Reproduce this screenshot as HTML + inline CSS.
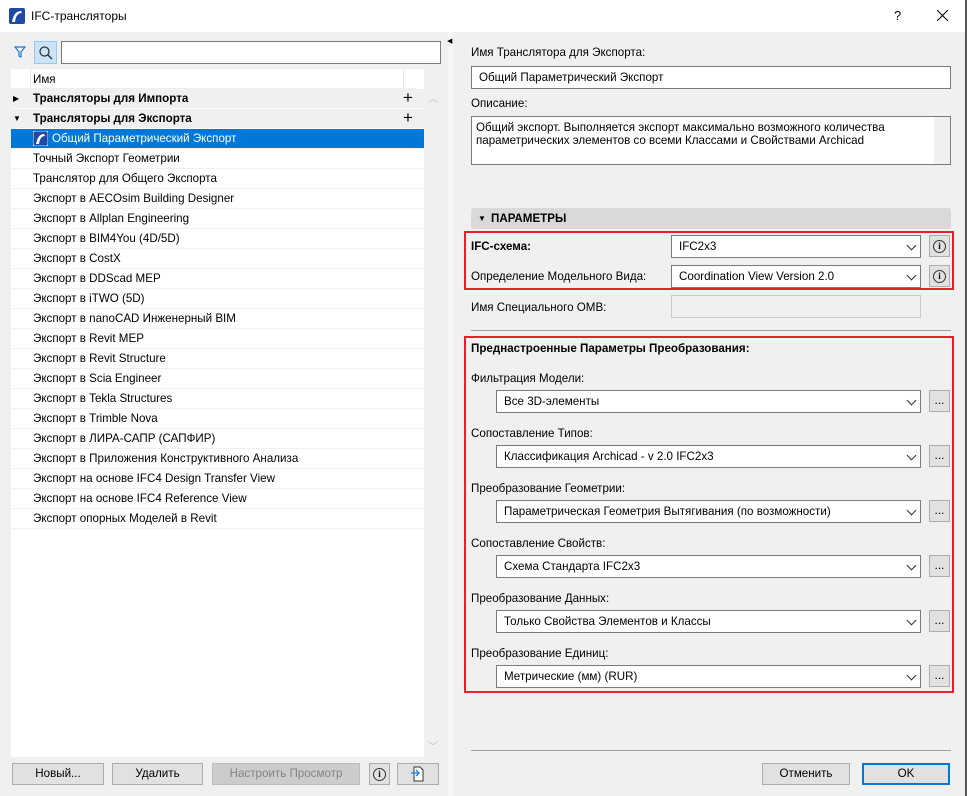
<!DOCTYPE html>
<html><head><meta charset="utf-8"><style>
*{box-sizing:border-box;margin:0;padding:0}
body{width:967px;height:796px;overflow:hidden;background:#f0f0f0;font-family:"Liberation Sans","DejaVu Sans",sans-serif;font-size:11.6px;color:#000;position:relative}
.a{position:absolute}
.inp{position:absolute;background:#fff;border:1px solid #7a7a7a;height:23px;padding:4px 7px;white-space:nowrap}
.sel{position:absolute;background:#fff;border:1px solid #7a7a7a;height:23px;padding:4px 7px;white-space:nowrap}
.sel:after{content:"";position:absolute;right:5px;top:6px;width:6px;height:6px;border-right:1px solid #333;border-bottom:1px solid #333;transform:rotate(45deg)}
.btn{position:absolute;background:#e1e1e1;border:1px solid #adadad;height:22px;text-align:center;line-height:20px}
.sq{position:absolute;background:#e1e1e1;border:1px solid #adadad;width:21px;height:22px;text-align:center;line-height:18px;font-size:12px}
.info{display:inline-block;width:13px;height:13px;border:1.5px solid #333;border-radius:50%;font-size:9px;line-height:10px;font-weight:bold;margin-top:4px;font-family:"Liberation Serif",serif}
.row{position:absolute;left:11px;width:413px;height:20px;line-height:20px;padding-left:22px;border-bottom:1px solid #f0f0f0;background:#fff;white-space:nowrap}
.lab{position:absolute;left:471px;white-space:nowrap}
.red{position:absolute;border:2px solid #e8202a}
</style></head><body>
<div class="a" style="left:0;top:0;width:967px;height:32px;background:#fff"></div>
<svg class="a" style="left:9px;top:8px" width="16" height="16"><rect width="16" height="16" rx="2" fill="#1f4aa8"/><path d="M3 14 Q5 3 12 3 L13 5 Q7 5 6 14Z" fill="#fff"/></svg>
<div class="a" style="left:31px;top:9px;font-size:12px">IFC-трансляторы</div>
<div class="a" style="left:894px;top:8px;font-size:13px">?</div>
<svg class="a" style="left:937px;top:10px" width="11" height="11"><path d="M0 0L11 11M11 0L0 11" stroke="#000" stroke-width="1"/></svg>
<div class="a" style="left:965px;top:0;width:2px;height:796px;background:#555"></div>

<svg class="a" style="left:14px;top:46px" width="12" height="12"><path d="M1 1H11L7 6V11L5 10V6Z" fill="none" stroke="#1e7ad6" stroke-width="1.2"/></svg>
<div class="a" style="left:34px;top:41px;width:23px;height:23px;background:#cce4f7;border:1px solid #99c9ef"></div>
<svg class="a" style="left:38px;top:45px" width="16" height="16"><circle cx="6.5" cy="6.5" r="4.5" fill="none" stroke="#333" stroke-width="1.3"/><path d="M10 10L14 14" stroke="#333" stroke-width="1.5"/></svg>
<div class="inp" style="left:61px;top:41px;width:380px"></div>

<div class="a" style="left:11px;top:69px;width:413px;height:688px;background:#fff"></div>
<div class="a" style="left:11px;top:69px;width:405px;height:20px;background:#fff;border-bottom:1px solid #eee"></div>
<div class="a" style="left:30px;top:69px;width:1px;height:20px;background:#e5e5e5"></div>
<div class="a" style="left:403px;top:69px;width:1px;height:20px;background:#e5e5e5"></div>
<div class="a" style="left:33px;top:73px">Имя</div>
<div class="row" style="top:89px;background:#f0f0f0;font-weight:bold;border-bottom:1px solid #fff">Трансляторы для Импорта<span class="a" style="left:2px;top:0;font-size:8px;font-weight:normal">▶</span><span class="a" style="left:392px;top:-1px;font-size:17px;font-weight:normal">+</span></div>
<div class="row" style="top:109px;background:#f0f0f0;font-weight:bold;border-bottom:1px solid #fff">Трансляторы для Экспорта<span class="a" style="left:2px;top:0;font-size:8px;font-weight:normal">▼</span><span class="a" style="left:392px;top:-1px;font-size:17px;font-weight:normal">+</span></div>
<div class="row" style="top:129px;background:#0078d7;color:#fff;padding-left:41px">Общий Параметрический Экспорт<svg class="a" style="left:22px;top:2px" width="15" height="15"><rect width="15" height="15" rx="2" fill="#1f4aa8" stroke="#fff" stroke-width=".8"/><path d="M3 13 Q5 3 11 3 L12 5 Q7 5 6 13Z" fill="#fff"/></svg></div>
<div class="row" style="top:149px">Точный Экспорт Геометрии</div>
<div class="row" style="top:169px">Транслятор для Общего Экспорта</div>
<div class="row" style="top:189px">Экспорт в AECOsim Building Designer</div>
<div class="row" style="top:209px">Экспорт в Allplan Engineering</div>
<div class="row" style="top:229px">Экспорт в BIM4You (4D/5D)</div>
<div class="row" style="top:249px">Экспорт в CostX</div>
<div class="row" style="top:269px">Экспорт в DDScad MEP</div>
<div class="row" style="top:289px">Экспорт в iTWO (5D)</div>
<div class="row" style="top:309px">Экспорт в nanoCAD Инженерный BIM</div>
<div class="row" style="top:329px">Экспорт в Revit MEP</div>
<div class="row" style="top:349px">Экспорт в Revit Structure</div>
<div class="row" style="top:369px">Экспорт в Scia Engineer</div>
<div class="row" style="top:389px">Экспорт в Tekla Structures</div>
<div class="row" style="top:409px">Экспорт в Trimble Nova</div>
<div class="row" style="top:429px">Экспорт в ЛИРА-САПР (САПФИР)</div>
<div class="row" style="top:449px">Экспорт в Приложения Конструктивного Анализа</div>
<div class="row" style="top:469px">Экспорт на основе IFC4 Design Transfer View</div>
<div class="row" style="top:489px">Экспорт на основе IFC4 Reference View</div>
<div class="row" style="top:509px">Экспорт опорных Моделей в Revit</div>
<div class="a" style="left:424px;top:89px;width:17px;height:668px;background:#f0f0f0"></div>
<div class="a" style="left:428px;top:90px;color:#bbb;font-size:10px">︿</div>
<div class="a" style="left:428px;top:738px;color:#bbb;font-size:10px">﹀</div>

<div class="btn" style="left:12px;top:763px;width:92px">Новый...</div>
<div class="btn" style="left:112px;top:763px;width:91px">Удалить</div>
<div class="btn" style="left:212px;top:763px;width:148px;background:#cccccc;border-color:#bfbfbf;color:#838383">Настроить Просмотр</div>
<div class="sq" style="left:369px;top:763px"><span class="info">i</span></div>
<div class="btn" style="left:397px;top:763px;width:42px"><svg width="16" height="18" style="margin-top:1px"><path d="M4 2H10L13 5V16H4Z" fill="#fff" stroke="#333"/><path d="M1 8H9M6 5L9 8L6 11" fill="none" stroke="#1e7ad6" stroke-width="1.3"/></svg></div>

<div class="a" style="left:448px;top:32px;width:5px;height:764px;background:#f7f7f7"></div>
<div class="a" style="left:447px;top:37px;font-size:7px">◀</div>

<div class="lab" style="top:46px">Имя Транслятора для Экспорта:</div>
<div class="inp" style="left:471px;top:66px;width:480px">Общий Параметрический Экспорт</div>
<div class="lab" style="top:97px">Описание:</div>
<div class="inp" style="left:471px;top:116px;width:480px;height:49px;white-space:normal;line-height:13px;padding:4px 32px 3px 4px">Общий экспорт. Выполняется экспорт максимально возможного количества параметрических элементов со всеми Классами и Свойствами Archicad</div>
<div class="a" style="left:934px;top:117px;width:16px;height:47px;background:#f0f0f0"></div>

<div class="a" style="left:471px;top:208px;width:480px;height:21px;background:#d9d9d9;border-radius:3px;font-weight:bold;line-height:21px;padding-left:20px">ПАРАМЕТРЫ<span class="a" style="left:7px;top:0;font-size:8px;font-weight:normal">▼</span></div>

<div class="red" style="left:464px;top:231px;width:490px;height:59px"></div>
<div class="lab" style="top:240px;font-weight:bold">IFC-схема:</div>
<div class="sel" style="left:671px;top:235px;width:250px">IFC2x3</div>
<div class="sq" style="left:929px;top:235px"><span class="info">i</span></div>
<div class="lab" style="top:270px">Определение Модельного Вида:</div>
<div class="sel" style="left:671px;top:265px;width:250px">Coordination View Version 2.0</div>
<div class="sq" style="left:929px;top:265px"><span class="info">i</span></div>
<div class="lab" style="top:301px">Имя Специального OMB:</div>
<div class="a" style="left:671px;top:295px;width:250px;height:23px;border:1px solid #ccc;background:#f0f0f0"></div>
<div class="a" style="left:471px;top:330px;width:480px;height:1px;background:#a0a0a0"></div>

<div class="red" style="left:464px;top:336px;width:490px;height:357px"></div>
<div class="lab" style="top:342px;font-weight:bold">Преднастроенные Параметры Преобразования:</div>

<div class="lab" style="top:372px">Фильтрация Модели:</div>
<div class="sel" style="left:496px;top:390px;width:425px">Все 3D-элементы</div>
<div class="sq" style="left:929px;top:390px">...</div>
<div class="lab" style="top:427px">Сопоставление Типов:</div>
<div class="sel" style="left:496px;top:445px;width:425px">Классификация Archicad - v 2.0 IFC2x3</div>
<div class="sq" style="left:929px;top:445px">...</div>
<div class="lab" style="top:482px">Преобразование Геометрии:</div>
<div class="sel" style="left:496px;top:500px;width:425px">Параметрическая Геометрия Вытягивания (по возможности)</div>
<div class="sq" style="left:929px;top:500px">...</div>
<div class="lab" style="top:537px">Сопоставление Свойств:</div>
<div class="sel" style="left:496px;top:555px;width:425px">Схема Стандарта IFC2x3</div>
<div class="sq" style="left:929px;top:555px">...</div>
<div class="lab" style="top:592px">Преобразование Данных:</div>
<div class="sel" style="left:496px;top:610px;width:425px">Только Свойства Элементов и Классы</div>
<div class="sq" style="left:929px;top:610px">...</div>
<div class="lab" style="top:647px">Преобразование Единиц:</div>
<div class="sel" style="left:496px;top:665px;width:425px">Метрические (мм) (RUR)</div>
<div class="sq" style="left:929px;top:665px">...</div>

<div class="a" style="left:471px;top:750px;width:480px;height:1px;background:#a0a0a0"></div>
<div class="btn" style="left:762px;top:763px;width:88px">Отменить</div>
<div class="btn" style="left:862px;top:763px;width:88px;border:2px solid #0078d7;line-height:18px">OK</div>
</body></html>
